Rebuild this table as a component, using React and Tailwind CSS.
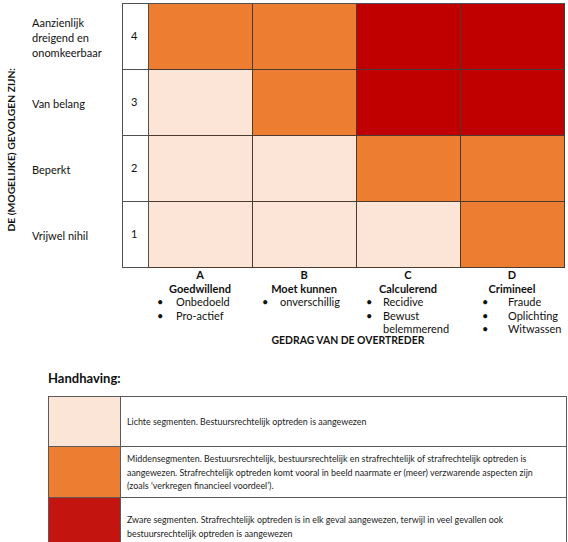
import React from 'react';

const fill = {
  l: 'bg-[#fce4d6]',
  o: 'bg-[#ed7d31]',
  r: 'bg-[#c00000]',
};

const rows = [
  { n: 4, label: ['Aanzienlijk', 'dreigend en', 'onomkeerbaar'], cells: ['o', 'o', 'r', 'r'] },
  { n: 3, label: ['Van belang'], cells: ['l', 'o', 'r', 'r'] },
  { n: 2, label: ['Beperkt'], cells: ['l', 'l', 'o', 'o'] },
  { n: 1, label: ['Vrijwel nihil'], cells: ['l', 'l', 'l', 'o'] },
];

const columns = [
  { letter: 'A', name: 'Goedwillend', items: ['Onbedoeld', 'Pro-actief'], indent: 'pl-[9px]', bullet: 'w-[19px]' },
  { letter: 'B', name: 'Moet kunnen', items: ['onverschillig'], indent: 'pl-[10px]', bullet: 'w-[18px]' },
  { letter: 'C', name: 'Calculerend', items: ['Recidive', 'Bewust belemmerend'], indent: 'pl-[10px]', bullet: 'w-[17px]' },
  { letter: 'D', name: 'Crimineel', items: ['Fraude', 'Oplichting', 'Witwassen'], indent: 'pl-[22px]', bullet: 'w-[26px]' },
];

const legend = [
  {
    color: 'bg-[#fbe5d6]',
    h: 'h-[50px]',
    align: 'items-center',
    text: 'Lichte segmenten. Bestuursrechtelijk optreden is aangewezen',
  },
  {
    color: 'bg-[#ed7d31]',
    h: 'h-[51px]',
    align: 'items-start pt-[5px]',
    text: 'Middensegmenten. Bestuursrechtelijk, bestuursrechtelijk en strafrechtelijk of strafrechtelijk optreden is aangewezen. Strafrechtelijk optreden komt vooral in beeld naarmate er (meer) verzwarende aspecten zijn (zoals ‘verkregen financieel voordeel’).',
  },
  {
    color: 'bg-[#c3140f]',
    h: 'h-[44px]',
    align: 'items-end pb-[2px]',
    text: 'Zware segmenten. Strafrechtelijk optreden is in elk geval aangewezen, terwijl in veel gevallen ook bestuursrechtelijk optreden is aangewezen',
  },
];

// Bullet list under each behaviour column
const BulletList = ({ items, indent, bullet }) => (
  <ul className={`${indent} text-[11px] leading-[13.5px]`}>
    {items.map((item) => (
      <li key={item} className="flex">
        <span className={`${bullet} shrink-0`}>•</span>
        <span className="w-[70px]">{item}</span>
      </li>
    ))}
  </ul>
);

export default function App() {
  return (
    <div className="w-[568px] h-[542px] overflow-hidden bg-white text-[#111] font-[family-name:Lato,sans-serif]">
      {/* Matrix */}
      <div className="flex pt-[3px]">
        <div className="w-[22px] h-[264px] flex items-center justify-center pt-[30px]">
          <span className="[writing-mode:vertical-rl] rotate-180 whitespace-nowrap font-bold text-[10.3px] leading-none">
            DE (MOGELIJKE) GEVOLGEN ZIJN:
          </span>
        </div>

        <div className="w-[100px] pl-[10px] pt-[1px]">
          {rows.map((row) => (
            <div key={row.n} className="h-[66px] flex flex-col justify-center text-[11px] leading-[15px]">
              {row.label.map((line) => (
                <span key={line}>{line}</span>
              ))}
            </div>
          ))}
        </div>

        <div className="border-l border-t border-[#505050]">
          {rows.map((row) => (
            <div key={row.n} className="flex h-[66px]">
              <div className="w-[26px] flex items-center pl-[8px] text-[11px] border-r border-b border-[#505050]">
                {row.n}
              </div>
              {row.cells.map((c, i) => (
                <div key={i} className={`w-[104px] border-r border-b border-[#4a3a30] ${fill[c]}`} />
              ))}
            </div>
          ))}
        </div>
      </div>

      {/* Behaviour axis */}
      <div className="flex ml-[148px]">
        {columns.map((col) => (
          <div key={col.letter} className="w-[104px]">
            <div className="text-center font-bold text-[11px] leading-[13.5px]">{col.letter}</div>
            <div className="text-center font-bold text-[11px] leading-[13.5px]">{col.name}</div>
            <BulletList items={col.items} indent={col.indent} bullet={col.bullet} />
          </div>
        ))}
      </div>
      <div className="mt-[-2px] ml-[140px] w-[416px] text-center font-bold text-[10.4px] leading-[13.5px]">
        GEDRAG VAN DE OVERTREDER
      </div>

      {/* Legend */}
      <div className="pl-[48px] mt-[23px] font-bold text-[13px] leading-[16px]">Handhaving:</div>
      <div className="ml-[48px] mt-[10px] w-[519px] border border-[#5a5a5a]">
        {legend.map((row, i) => (
          <div key={i} className={`flex ${row.h} ${i < legend.length - 1 ? 'border-b border-[#5a5a5a]' : ''}`}>
            <div className={`w-[72px] shrink-0 border-r border-[#5a5a5a] ${row.color}`} />
            <div className={`flex flex-1 ${row.align} pl-[6px] pr-[12px] text-[8.9px] leading-[13.5px] text-[#222]`}>
              <span>{row.text}</span>
            </div>
          </div>
        ))}
      </div>
    </div>
  );
}
